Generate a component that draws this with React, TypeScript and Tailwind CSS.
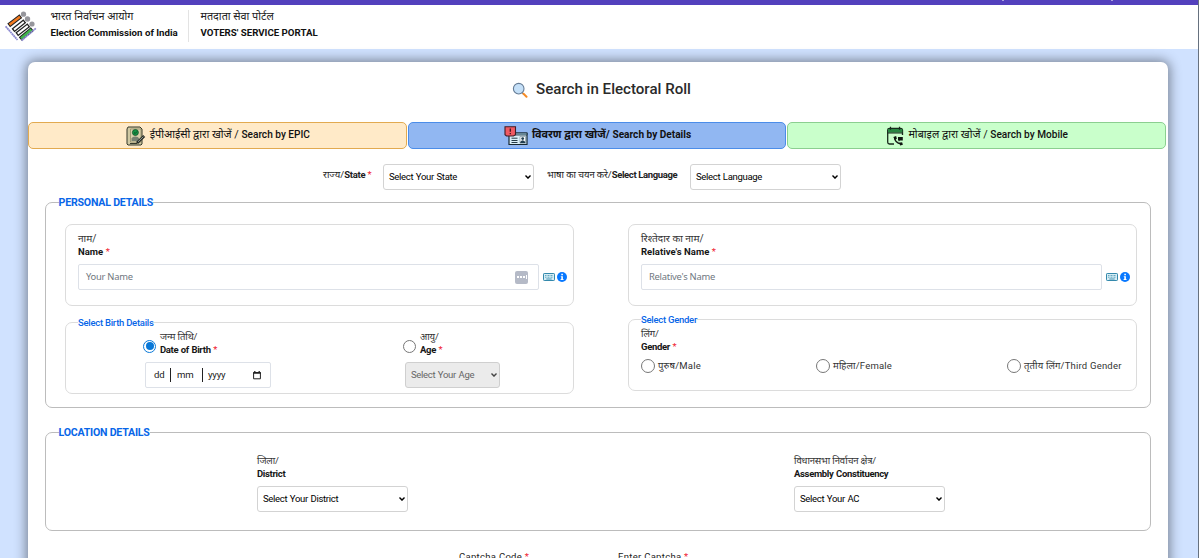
import React from "react";
import clsx from "clsx";

// ── Icons ──────────────────────────────────────────────────────────────────

function CommissionLogo() {
  return (
    <svg viewBox="0 0 34 32" className="h-8 w-[34px] shrink-0" aria-hidden="true">
      <g fill="#96969c">
        <circle cx="18.5" cy="3.2" r="2.6" />
        <circle cx="22.5" cy="8" r="2.7" />
        <circle cx="27" cy="13" r="2.6" />
      </g>
      <g fill="none" strokeLinecap="square">
        <path d="M5.5 13 14 6.5M9.8 18 18 11.5M13.5 22 22 15.5M17 26.5 25.5 19.5" stroke="#222" strokeWidth="4.6" />
        <path d="M5.5 13 14 6.5" stroke="#f47b20" strokeWidth="2.5" />
        <path d="M9.8 18 18 11.5M13.5 22 22 15.5" stroke="#fff" strokeWidth="2" />
        <path d="M17 26.5 25.5 19.5" stroke="#3fb549" strokeWidth="2.7" />
      </g>
      <path d="M.6 15.3 12.5 29M16.5 29.5 31 17.2" fill="none" stroke="#8d8ad0" strokeWidth="1.8" strokeDasharray="2 .4" />
    </svg>
  );
}

function SearchIcon() {
  return (
    <svg viewBox="0 0 16 16" className="h-4 w-4" fill="none" aria-hidden="true">
      <path d="m10.2 10.7 1.6 1.5" stroke="#7b8794" strokeWidth="1.5" />
      <path d="m11.5 11.8 3 3" stroke="#f58a24" strokeWidth="2" strokeLinecap="round" />
      <circle cx="6.7" cy="6.7" r="5.3" fill="#c5e0f8" stroke="#657c96" strokeWidth="1.1" />
    </svg>
  );
}

function EpicIcon() {
  return (
    <svg viewBox="0 0 20 20" className="h-5 w-5" fill="none" aria-hidden="true">
      <path d="M3 1h11l2 2v15l-1 1H2l-1-1V3l1-2Z" fill="#cfc8a2" stroke="#35392b" strokeWidth="1" />
      <path d="M4.5 3H15v13H4.5z" fill="#d8d0aa" stroke="#817b58" strokeWidth=".6" />
      <circle cx="9.4" cy="6.5" r="3" fill="#139344" stroke="#15502a" strokeWidth=".8" />
      <path d="m8 6.5 1.2 1 1.8-2" stroke="#103a1e" strokeWidth=".8" />
      <path d="M5.5 15v-2.5q.7-2 3.8-2t3.8 2V15Z" fill="#788172" />
      <path d="m11 17 7.2-7" stroke="#272c28" strokeWidth="2.8" />
      <path d="m12 15.8 5.4-5.2" stroke="#9ca598" />
      <path d="M4 17.5h7" stroke="#35392b" />
    </svg>
  );
}

function DetailsIcon() {
  return (
    <svg viewBox="0 0 24 20" className="h-5 w-6" fill="none" aria-hidden="true">
      <path d="M5 7h18v11.5H5z" fill="#d9eff8" stroke="#162933" strokeWidth="1.2" />
      <path d="M5 7h18v2H5z" fill="#9bc4d6" stroke="#162933" strokeWidth=".8" />
      <path d="M7.5 12.2h6M7.5 14.5h6M7.5 16.5h6" stroke="#263c48" />
      <path d="M16 10.5h5.5v6.8H16z" fill="#fff" stroke="#587380" strokeWidth=".5" />
      <circle cx="18.7" cy="12.6" r="1.4" fill="#203e50" />
      <path d="M16 17q.4-2.7 2.7-2.7t2.7 2.7Z" fill="#203e50" />
      <path d="M1 .8h10.5v8L9.5 10h-7L1 8.8Z" fill="#f05a62" stroke="#401d27" strokeWidth="1.1" />
      <path d="M6.3 2.5v3.3M6.3 7v1.3" stroke="#3b1821" strokeWidth="1.3" />
    </svg>
  );
}

function MobileIcon() {
  return (
    <svg viewBox="0 0 18 20" className="h-5 w-[18px]" fill="none" aria-hidden="true">
      <path d="M1.7 6v10.3q0 1.7 1.8 1.7H8M16.5 9V4.2q0-1.7-1.8-1.7H3.5Q1.7 2.5 1.7 4v3" stroke="#182a1c" strokeWidth="1.3" />
      <path d="M2 3h14.3v3.7H2z" fill="#278641" />
      <path d="M1.2 7h15.6M4.5.7v3M13.5.7v3" stroke="#182a1c" strokeWidth="1.2" />
      <path d="M8.5 11.2q.5 5.8 6.5 6.6" stroke="#101711" strokeWidth="1.5" />
      <path d="m7.4 11 2.7-1 .8 2.8-2 1.2zM13.3 16.7l2.8-.5.8 2.5-2.8.7zM12 11h4.8v3.5h-3l-1 1.3v-1.4H12z" fill="#101711" />
    </svg>
  );
}

function KeyboardIcon() {
  return (
    <svg viewBox="0 0 12 8" className="h-2 w-3" fill="none" aria-hidden="true">
      <rect x=".5" y=".5" width="11" height="7" rx=".7" fill="#d6edf5" stroke="#3489ac" />
      <path d="M2 2.5h8M2 4.2h8" stroke="#59a1bc" strokeWidth=".9" strokeDasharray="1 .5" />
      <path d="M3.3 6h5.4" stroke="#3489ac" strokeWidth=".9" />
    </svg>
  );
}

function InfoIcon() {
  return (
    <svg viewBox="0 0 10 10" className="h-[10px] w-[10px]" aria-hidden="true">
      <circle cx="5" cy="5" r="5" fill="#0878ff" />
      <path d="M4.3 1.8h1.6v1.5H4.3zM3.8 4.2h2.1v2.7h.6v1H3.6v-1h.7V5.1h-.5z" fill="#fff" />
    </svg>
  );
}

function CalendarIcon() {
  return (
    <svg viewBox="0 0 8 9" className="h-[9px] w-2" fill="none" aria-hidden="true">
      <path d="M.6 1.5h6.8v6.3H.6z" stroke="#222" />
      <path d="M.2 2h7.6M1.8 0v2M6.2 0v2" stroke="#222" strokeWidth="1.3" />
    </svg>
  );
}

// ── Form parts ─────────────────────────────────────────────────────────────

function Star() {
  return <span className="font-normal text-[#f02030]">*</span>;
}

function Select({ label, disabled, className }: { label: string; disabled?: boolean; className?: string }) {
  return (
    <div
      role="combobox"
      aria-disabled={disabled}
      className={clsx(
        "flex h-[26px] shrink-0 items-center justify-between rounded-[3px] border pr-[2px] pl-[5px] text-[9.5px] tracking-[-0.3px] [word-spacing:0.5px]",
        disabled ? "border-[#cfcfcf] bg-[#ebebeb] text-[#666]" : "border-[#d3d3d3] bg-white text-black",
        className
      )}
    >
      <span className="whitespace-nowrap">{label}</span>
      <svg viewBox="0 0 6 4" className="h-1 w-1.5" fill="none" aria-hidden="true">
        <path d="m.5.6 2.5 2.5L5.5.6" stroke={disabled ? "#444" : "#000"} strokeWidth="1.4" />
      </svg>
    </div>
  );
}

type FieldLabelProps = { hindi: string; english: string; required?: boolean; wide?: boolean };

function FieldLabel({ hindi, english, required, wide }: FieldLabelProps) {
  return (
    <div className="pb-px whitespace-nowrap">
      <div className={clsx("leading-[13.5px] text-[#333]", wide ? "text-[10.1px]" : "text-[9.5px] tracking-[-0.16px]")}>
        {hindi}/
      </div>
      <div
        className={clsx(
          "text-[9.5px] leading-[12.5px] font-bold text-[#161616]",
          wide ? "tracking-[0.03px]" : "tracking-[-0.33px] [word-spacing:0.5px]"
        )}
      >
        {english} {required && <Star />}
      </div>
    </div>
  );
}

function Radio({ checked, className }: { checked?: boolean; className?: string }) {
  return (
    <span
      className={clsx(
        "flex shrink-0 items-center justify-center rounded-full border bg-white",
        checked ? "border-[#0878d8]" : "border-[#777]",
        className
      )}
    >
      {checked && <span className="h-2 w-2 rounded-full bg-[#0878d8]" />}
    </span>
  );
}

function NameBox({ hindi, english, placeholder, filler }: { hindi: string; english: string; placeholder: string; filler?: boolean }) {
  return (
    <div className="h-[82px] w-[509px] rounded-[7px] border border-[#dcdcdc] pt-[7px] pl-3">
      <FieldLabel hindi={hindi} english={english} required wide />
      <div className="mt-[5px] flex items-center">
        <div className="flex h-[26px] w-[461px] items-center justify-between rounded-[2px] border border-[#dde1e8] pr-2.5 pl-[7px]">
          <span className="font-['Noto_Sans'] text-[9.4px] tracking-[-0.25px] text-[#6f7780]">{placeholder}</span>
          {filler && (
            <span className="flex h-[13px] w-[13px] items-center justify-center gap-px rounded-[2px] bg-[#b5bac7]">
              <i className="h-0.5 w-0.5 bg-white" />
              <i className="h-0.5 w-0.5 bg-white" />
              <i className="h-0.5 w-0.5 bg-white" />
              <i className="h-1 w-px bg-white" />
            </span>
          )}
        </div>
        <div className="ml-1 flex items-center gap-0.5">
          <KeyboardIcon />
          <InfoIcon />
        </div>
      </div>
    </div>
  );
}

const TABS = [
  {
    hindi: "ईपीआईसी द्वारा खोजें / ",
    english: "Search by EPIC",
    icon: <EpicIcon />,
    style: "border-[#e2aa50] bg-[#ffeac8]",
    hindiText: "text-[10.8px] font-normal",
    englishText: "text-[10.1px] font-medium",
  },
  {
    hindi: "विवरण द्वारा खोजें/ ",
    english: "Search by Details",
    icon: <DetailsIcon />,
    style: "border-[#4b8de9] bg-[#91b7f2]",
    hindiText: "text-[10.8px] font-bold",
    englishText: "text-[10.1px] font-bold",
  },
  {
    hindi: "मोबाइल द्वारा खोजें / ",
    english: "Search by Mobile",
    icon: <MobileIcon />,
    style: "border-[#8bcf90] bg-[#c9ffcb]",
    hindiText: "text-[10.8px] font-normal",
    englishText: "text-[10.1px] font-medium",
  },
];

const GENDERS = [
  { label: "पुरुष/Male", width: "w-[175px]" },
  { label: "महिला/Female", width: "w-[191px]" },
  { label: "तृतीय लिंग/Third Gender", width: "w-[120px]" },
];

function Header() {
  return (
    <header>
      <div className="flex h-[5px] items-start bg-[#5340bd] pl-[1002px]">
        <span className="h-px w-0.5 bg-[#aaa1df]" />
        <span className="ml-[107px] h-px w-0.5 bg-[#aaa1df]" />
      </div>
      <div className="flex h-11 items-start bg-white pl-[5px] text-[9.7px] leading-[15.5px] whitespace-nowrap">
        <div className="pt-[6px]">
          <CommissionLogo />
        </div>
        <div className="ml-[11.5px] w-[137px] pt-1">
          <div className="text-[10.8px] text-[#222]">भारत निर्वाचन आयोग</div>
          <div className="font-bold text-[#111]">Election Commission of India</div>
        </div>
        <div className="mt-[5px] h-8 w-px bg-[#e3e3e3]" />
        <div className="ml-3 pt-1">
          <div className="text-[10.8px] text-[#222]">मतदाता सेवा पोर्टल</div>
          <div className="font-bold text-[#111]">VOTERS' SERVICE PORTAL</div>
        </div>
      </div>
    </header>
  );
}

function PersonalDetails() {
  return (
    <fieldset className="mx-[17px] mt-[6px] h-[212px] rounded-[7px] border border-[#bcbcbc]">
      <legend className="ml-[12.5px] h-[13px] text-[10.6px] leading-[13px] font-bold tracking-[-0.2px] whitespace-nowrap text-[#0866e8]">
        PERSONAL DETAILS
      </legend>
      <div className="mt-[15px] flex justify-between pr-[13px] pl-[19px]">
        <NameBox hindi="नाम" english="Name" placeholder="Your Name" filler />
        <NameBox hindi="रिश्तेदार का नाम" english="Relative's Name" placeholder="Relative's Name" />
      </div>
      <div className="mt-[6px] flex items-start justify-between pr-[13px] pl-[19px]">
        <fieldset className="mt-[3px] h-[79px] w-[509px] rounded-[7px] border border-[#dcdcdc]">
          <legend className="ml-3 h-[14px] text-[9.5px] leading-[15px] font-medium tracking-[-0.27px] whitespace-nowrap text-[#0866e8]">
            Select Birth Details
          </legend>
          <div className="flex pt-px pl-[77px]">
            <div className="w-[260px]">
              <div className="flex items-center">
                <Radio checked className="mt-[5px] h-[13px] w-[13px]" />
                <div className="ml-1">
                  <FieldLabel hindi="जन्म तिथि" english="Date of Birth" required />
                </div>
              </div>
              <div className="mt-[5px] ml-[2px] flex h-[26px] w-[126px] items-center rounded-[2px] border border-[#dde1e8] text-[9.6px] tracking-[-0.2px] text-[#222]">
                <span className="w-6 pl-2">dd</span>
                <span className="h-[14px] w-px bg-[#222]" />
                <span className="w-[31px] pl-[6px]">mm</span>
                <span className="h-[14px] w-px bg-[#222]" />
                <span className="w-[50px] pl-[5px]">yyyy</span>
                <CalendarIcon />
              </div>
            </div>
            <div>
              <div className="flex items-center">
                <Radio className="mt-[5px] h-[13px] w-[13px]" />
                <div className="ml-1">
                  <FieldLabel hindi="आयु" english="Age" required />
                </div>
              </div>
              <Select label="Select Your Age" disabled className="mt-[5px] ml-[2px] w-[95px]" />
            </div>
          </div>
        </fieldset>
        <fieldset className="h-[79px] w-[509px] rounded-[7px] border border-[#dcdcdc]">
          <legend className="ml-3 h-[14px] text-[9.5px] leading-[15px] font-medium tracking-[-0.27px] whitespace-nowrap text-[#0866e8]">
            Select Gender
          </legend>
          <div className="pt-px pl-3">
            <FieldLabel hindi="लिंग" english="Gender" required />
            <div className="mt-[5px] flex text-[9.5px] tracking-[0.2px] whitespace-nowrap text-[#333]">
              {GENDERS.map((g) => (
                <label key={g.label} className={clsx("flex items-center gap-[3px]", g.width)}>
                  <Radio className="h-[14px] w-[14px]" />
                  {g.label}
                </label>
              ))}
            </div>
          </div>
        </fieldset>
      </div>
    </fieldset>
  );
}

function LocationDetails() {
  return (
    <fieldset className="mx-[17px] mt-[18px] h-[105px] rounded-[7px] border border-[#bcbcbc]">
      <legend className="ml-[12.5px] h-[13px] text-[10.6px] leading-[13px] font-bold tracking-[-0.22px] whitespace-nowrap text-[#0866e8]">
        LOCATION DETAILS
      </legend>
      <div className="mt-[15px] flex pl-[211px]">
        <div className="w-[537px]">
          <FieldLabel hindi="जिला" english="District" />
          <Select label="Select Your District" className="mt-[5px] w-[151px]" />
        </div>
        <div>
          <FieldLabel hindi="विधानसभा निर्वाचन क्षेत्र" english="Assembly Constituency" />
          <Select label="Select Your AC" className="mt-[5px] w-[151px]" />
        </div>
      </div>
    </fieldset>
  );
}

export default function App() {
  return (
    <div className="flex h-[558px] w-[1199px] overflow-hidden bg-[#d0e2ff] font-['Roboto','Noto_Sans_Devanagari','Noto_Sans',sans-serif]">
      <div className="w-[1198px] shrink-0">
        <Header />
        <main className="mt-[13px] ml-7 h-[600px] w-[1140px] rounded-[7px] bg-white shadow-[0_0_12px_2px_rgba(0,0,0,0.42)]">
          <div className="flex h-[60px] items-center justify-center gap-2 pb-[5px] pl-[7px]">
            <SearchIcon />
            <h1 className="text-[15.1px] font-medium whitespace-nowrap text-[#2a2a2a]">Search in Electoral Roll</h1>
          </div>
          <nav className="flex gap-px pr-0.5">
            {TABS.map((tab) => (
              <button
                key={tab.english}
                className={clsx(
                  "flex h-[27px] flex-1 items-center justify-center gap-1 rounded-[5px] border pl-px whitespace-nowrap text-[#111]",
                  tab.style
                )}
              >
                {tab.icon}
                <span className="pb-1 leading-4">
                  <span className={tab.hindiText}>{tab.hindi}</span>
                  <span className={tab.englishText}>{tab.english}</span>
                </span>
              </button>
            ))}
          </nav>
          <div className="mt-[15px] flex h-[26px] items-center pl-[295px] text-[9.5px] whitespace-nowrap text-[#222]">
            <span className="w-[60px] pb-[3px]">
              राज्य/<b className="tracking-[-0.3px]">State</b> <Star />
            </span>
            <Select label="Select Your State" className="w-[151px]" />
            <span className="ml-[13px] w-[143px] pb-[3px]">
              <span className="tracking-[-0.1px]">भाषा का चयन करे/</span>
              <b className="tracking-[-0.36px]">Select Language</b>
            </span>
            <Select label="Select Language" className="w-[151px]" />
          </div>
          <PersonalDetails />
          <LocationDetails />
          <div className="mt-[19px] flex pl-[431px] text-[9.5px] leading-[14px] tracking-[0.3px] whitespace-nowrap text-[#222]">
            <span className="w-[159px]">
              Captcha Code <Star />
            </span>
            <span>
              Enter Captcha <Star />
            </span>
          </div>
        </main>
      </div>
      <div className="w-px shrink-0 bg-[#66717f]" />
    </div>
  );
}
